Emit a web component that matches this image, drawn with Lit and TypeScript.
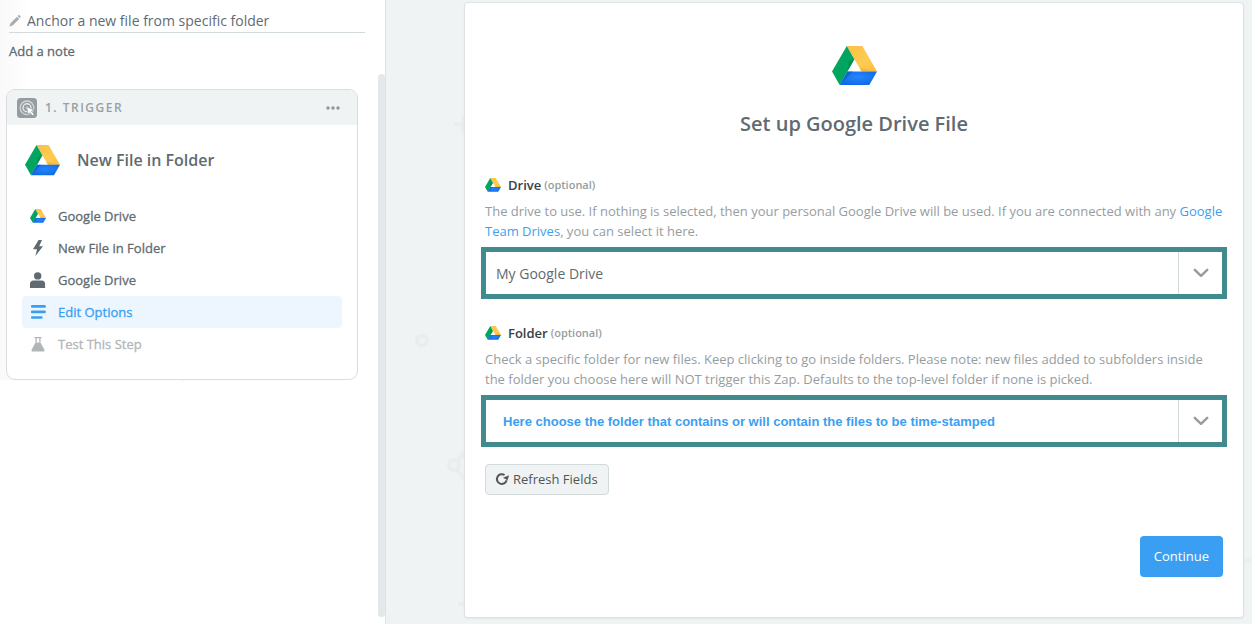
import { LitElement, html, css, svg } from "lit";
import { customElement, property } from "lit/decorators.js";
import { classMap } from "lit/directives/class-map.js";

@customElement("drive-logo")
class DriveLogo extends LitElement {
  static styles = css`
    :host { display: inline-flex; flex: none; }
    svg { display: block; width: 100%; height: auto; }
  `;
  render() {
    return html`<svg viewBox="0 0 45 39" aria-hidden="true">
      <defs>
        <radialGradient id="blue" cx="0.5" cy="0.4" r="0.6"><stop offset="0" stop-color="#2684fc" /><stop offset="1" stop-color="#0f6ce8" /></radialGradient>
        <linearGradient id="yellow" x1="0" y1="0" x2="1" y2="1"><stop offset="0" stop-color="#fdbf45" /><stop offset="0.6" stop-color="#ffcb52" /><stop offset="1" stop-color="#fbbc3c" /></linearGradient>
      </defs>
      <path fill="url(#yellow)" d="M14.8 0H30.3L45 25.5H29.5z" />
      <path fill="#e9ab35" opacity=".6" d="M27.5 22l2 3.5H45z" />
      <path fill="#02a560" d="M14.8 0L22.4 13.2 7.7 39 0 25.5z" />
      <path fill="#04894f" opacity=".7" d="M22.4 13.2L16.5 15.5 15.5 25.5z" />
      <path fill="url(#blue)" d="M15.4 25.5H45L37.3 39H7.7z" />
      <path fill="#0b57c8" opacity=".6" d="M15.4 25.5h5.2L7.7 39z" />
    </svg>`;
  }
}

const icons: Record<string, unknown> = {
  bolt: svg`<path fill="currentColor" d="M8.600 0L3 9.200H7L5.400 16 13 6.200H9.200L12 0z"/>`,
  person: svg`<circle cx="7.700" cy="3.900" r="3.700" fill="currentColor"/><path fill="currentColor" d="M0 16v-4.200C0 9.800 1.400 8.400 3.400 8.400H11.700c2 0 3.400 1.400 3.400 3.400V16z"/>`,
  lines: svg`<path stroke="currentColor" stroke-width="2.600" stroke-linecap="round" d="M2.200 2.400h12.400M2.200 7.900h12.400M2.200 13.500h9.200"/>`,
  flask: svg`<path fill="none" stroke="currentColor" stroke-width="1.300" d="M4.500 1.600h7M6.100 2v4.600M9.900 2v4.600"/><path fill="currentColor" d="M5.500 6.500h5l3.900 7.200c.5 1-.1 1.800-1.100 1.800H2.700c-1 0-1.600-.8-1.100-1.800z"/>`,
};

@customElement("step-card")
class StepCard extends LitElement {
  static styles = css`
    :host { display: block; }
    .card { position: relative; border: 1px solid #d7dde0; border-radius: 9px; background: #fff; }
    .card::after { content: ""; position: absolute; left: 50%; top: 100%; width: 1px; height: 2px; background: #d7dde0; }
    .head { display: flex; align-items: center; height: 35px; padding: 0 16px 0 10px; background: #eff3f4; border-radius: 8px 8px 0 0; color: #999fa3; font-size: 12px; font-weight: 600; letter-spacing: 1.5px; }
    .badge { width: 20px; height: 20px; margin-right: 8px; }
    .more { display: flex; margin-left: auto; padding: 4px 0; border: 0; background: none; color: #8f969a; }
    .title { display: flex; align-items: center; gap: 17px; margin: 0; padding: 20px 18px 24px; font-size: 16px; font-weight: 600; line-height: 31px; color: #5f6b70; }
    .title drive-logo { width: 35px; }
    .steps { list-style: none; margin: 0; padding: 0 15px 19px; }
    .step { display: flex; align-items: center; gap: 12px; width: 100%; height: 32px; box-sizing: border-box; padding: 0 8px; border: 0; border-radius: 4px; background: none; font: 500 13px "Open Sans", sans-serif; -webkit-text-stroke: 0.3px currentColor; color: #5f6b70; text-align: left; }
    .step svg, .step drive-logo { width: 16px; }
    .step.active { background: #edf6fe; color: #3a9ff2; }
    .step.disabled { color: #b1b6b9; }
  `;
  steps = [
    { label: "Google Drive", icon: "drive" },
    { label: "New File in Folder", icon: "bolt" },
    { label: "Google Drive", icon: "person" },
    { label: "Edit Options", icon: "lines", active: true },
    { label: "Test This Step", icon: "flask", disabled: true },
  ];
  render() {
    return html`<section class="card">
      <header class="head">
        <svg class="badge" viewBox="0 0 20 20" aria-hidden="true">
          <rect width="20" height="20" rx="3.500" fill="#969da1" />
          <g fill="none" stroke="#e6e9eb"><circle cx="10" cy="9.800" r="6.800" stroke-width="1.300" opacity=".75"/><circle cx="10" cy="9.800" r="4" stroke-width="1.400"/></g>
          <circle cx="10" cy="9.800" r="1.400" fill="#e6e9eb" />
          <path fill="#fff" stroke="#969da1" stroke-width=".7" d="M9.500 8.800l7.900 3.100-2.900 1.400 2.700 2.900-1.500 1.400-2.700-2.900-1.500 2.600z" />
        </svg>
        <span>1. TRIGGER</span>
        <button class="more" aria-label="More options"><svg width="16" height="6" viewBox="0 0 16 6" fill="currentColor"><circle cx="3" cy="3" r="1.700"/><circle cx="8" cy="3" r="1.700"/><circle cx="13" cy="3" r="1.700"/></svg></button>
      </header>
      <h2 class="title"><drive-logo></drive-logo>New File in Folder</h2>
      <ul class="steps">
        ${this.steps.map((s) => html`<li><button class=${classMap({ step: true, active: !!s.active, disabled: !!s.disabled })} ?disabled=${!!s.disabled}>
          ${s.icon === "drive" ? html`<drive-logo></drive-logo>` : html`<svg width="16" height="16" viewBox="0 0 16 16" aria-hidden="true">${icons[s.icon]}</svg>`}
          <span>${s.label}</span></button></li>`)}
      </ul>
    </section>`;
  }
}

@customElement("field-select")
class FieldSelect extends LitElement {
  @property() label = "";
  @property() value = "";
  @property({ type: Boolean }) hint = false;
  static styles = css`
    :host { display: block; }
    .label { display: flex; align-items: center; line-height: 20px; font-size: 13px; font-weight: 600; color: #354047; }
    .label drive-logo { width: 16px; margin-right: 7px; }
    .optional { margin-left: 3px; font-size: 11px; color: #969da1; }
    .help { margin: 6px 0; font-size: 13px; line-height: 20px; color: #969da1; }
    .frame { position: relative; display: grid; margin: 0 -4px; border: 5px solid #418b8e; background: #fff; }
    select { appearance: none; width: 100%; height: 42px; border: 0; border-radius: 0; padding: 0 56px 0 10px; background: #fff; font: 14px "Open Sans", sans-serif; color: #5f6b70; }
    select.hint { padding-left: 17px; font: bold 13px "Liberation Sans", Arial, sans-serif; color: #3a9ff2; }
    .arrow { position: absolute; top: 0; right: 0; bottom: 0; width: 43px; display: grid; place-items: center; border-left: 1px solid #d3dadc; pointer-events: none; }
  `;
  render() {
    return html`
      <label class="label" for="choice"><drive-logo></drive-logo>${this.label}<span class="optional">(optional)</span></label>
      <p class="help"><slot></slot></p>
      <div class="frame">
        <select id="choice" class=${classMap({ hint: this.hint })}><option>${this.value}</option></select>
        <span class="arrow"><svg width="16" height="10" viewBox="0 0 16 10" fill="none" stroke="#969da1" stroke-width="2.500" stroke-linecap="round" stroke-linejoin="round" aria-hidden="true"><path d="M1.800 1.800L8 7.800l6.200-6"/></svg></span>
      </div>`;
  }
}

@customElement("app-root")
class AppRoot extends LitElement {
  static styles = css`
    :host { display: flex; min-height: 100vh; font: 13px/20px "Open Sans", sans-serif; color: #5f6b70; background: #eff3f4; }
    .sidebar { position: relative; flex: none; width: 386px; box-sizing: border-box; padding: 9px 20px 0 6px; border-right: 1px solid #dde2e4; background: linear-gradient(90deg, #f9f9f9, #fff 30px) 0 0 / 100% 380px no-repeat #fff; }
    .name { display: flex; align-items: center; gap: 6px; height: 23px; margin: 0 0 0 3px; border-bottom: 1px solid #d3dadc; }
    .name input { flex: 1; min-width: 0; padding: 0; border: 0; background: none; font: 14px "Open Sans", sans-serif; color: #5f6b70; }
    .note { display: block; margin: 8px 3px 28px; padding: 0; border: 0; background: none; font: 500 13px/20px "Open Sans", sans-serif; -webkit-text-stroke: 0.3px currentColor; color: #5f6b70; }
    step-card { margin-right: 7px; }
    .thumb { position: absolute; top: 74px; right: 0; bottom: 7px; width: 7px; border-radius: 4px; background: #e3e8ea; }
    main { position: relative; flex: 1; min-width: 0; padding: 2px 8px 6px 78px; }
    .backdrop { position: absolute; left: 0; top: 0; }
    .edge { position: absolute; right: 0; top: 559px; width: 8px; height: 4px; background: #eaeeef; }
    .panel { position: relative; display: flex; flex-direction: column; box-sizing: border-box; min-height: 100%; padding: 43px 20px 40px; border: 1px solid #dde2e4; border-radius: 4px; background: #fff; box-shadow: 0 1px 2px #0000000d; }
    .logo { align-self: center; width: 45px; }
    h1 { margin: 25px 0 37px; font-size: 20px; line-height: 28px; font-weight: 600; text-align: center; }
    .second { margin-top: 24px; }
    a { color: #3a9ff2; text-decoration: none; }
    .refresh { display: flex; align-items: center; gap: 4px; align-self: flex-start; height: 31px; margin-top: 17px; padding: 0 10px 1px 9px; border: 1px solid #d3dadc; border-radius: 4px; background: #eff3f4; font: 13px "Open Sans", sans-serif; color: #555; }
    .continue { align-self: flex-end; height: 41px; margin-top: 41px; padding: 0 14px 1px; border: 0; border-radius: 4px; background: #3a9ff2; font: 13px "Open Sans", sans-serif; color: #fff; }
  `;
  render() {
    return html`
      <aside class="sidebar">
        <div class="name">
          <svg width="12" height="12" viewBox="0 0 12 12" fill="#a6adb1" aria-hidden="true"><path d="M.4 11.600L1.500 8.200 8 1.700l2.200 2.200-6.600 6.500zM8.600 1.100l.6-.6c.5-.5 1-.5 1.400-.1l.8.8c.4.4.4.900-.1 1.400l-.6.600z"/></svg>
          <input aria-label="Zap name" .value=${"Anchor a new file from specific folder"} />
        </div>
        <button class="note">Add a note</button>
        <step-card></step-card>
        <div class="thumb"></div>
      </aside>
      <main>
        <svg class="backdrop" width="90" height="620" viewBox="0 0 90 620" fill="none" stroke="#e8edee" stroke-width="4" stroke-linecap="round" aria-hidden="true">
          <path d="M70 124.500h6M77 118v13"/><circle cx="36" cy="340.500" r="5"/><circle cx="68" cy="465" r="5"/><path d="M72 460l10-10M71 470l12 14M74 604h8"/>
        </svg>
        <div class="edge"></div>
        <section class="panel">
          <drive-logo class="logo"></drive-logo>
          <h1>Set up Google Drive File</h1>
          <field-select label="Drive" value="My Google Drive">The drive to use. If nothing is selected, then your personal Google Drive will be used. If you are connected with any <a href="#">Google Team Drives</a>, you can select it here.</field-select>
          <field-select class="second" label="Folder" hint value="Here choose the folder that contains or will contain the files to be time-stamped">Check a specific folder for new files. Keep clicking to go inside folders. Please note: new files added to subfolders inside the folder you choose here will NOT trigger this Zap. Defaults to the top-level folder if none is picked.</field-select>
          <button class="refresh"><svg width="14" height="14" viewBox="0 0 14 14" aria-hidden="true"><path d="M11.600 8.300A4.900 4.900 0 1 1 9.600 3" fill="none" stroke="#555" stroke-width="2"/><path d="M8 5.800L14 3.200 12.600 8.200z" fill="#555"/></svg>Refresh Fields</button>
          <button class="continue">Continue</button>
        </section>
      </main>`;
  }
}
